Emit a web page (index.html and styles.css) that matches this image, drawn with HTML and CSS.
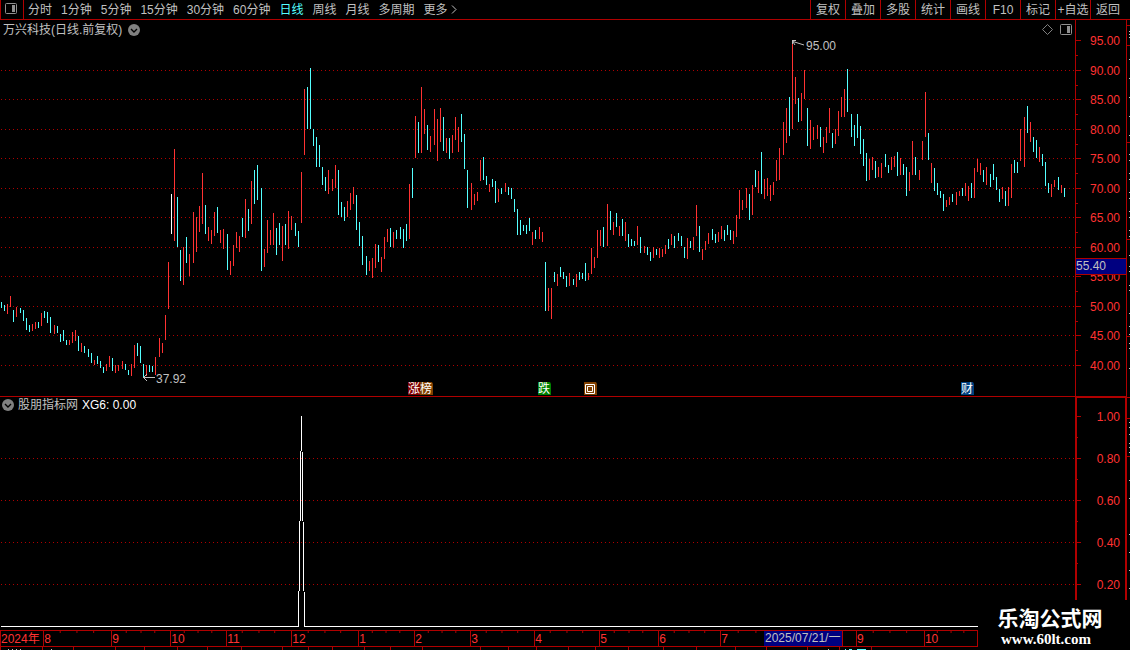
FILE: index.html
```
<!DOCTYPE html>
<html lang="zh-CN">

<head>
    <meta charset="UTF-8">
    <title>万兴科技 日线</title>
    <link rel="stylesheet" href="styles.css">
</head>

<body>
    <header class="toolbar">
        <button class="panel-btn" aria-label="侧栏">
            <svg width="12" height="11"><rect x="0.5" y="0.5" width="11" height="10" rx="1" fill="none" stroke="#909090"/><rect x="7" y="2" width="3" height="7" fill="#909090"/></svg>
        </button>
        <nav class="periods">
            <button>分时</button>
            <button>1分钟</button>
            <button>5分钟</button>
            <button>15分钟</button>
            <button>30分钟</button>
            <button>60分钟</button>
            <button class="active">日线</button>
            <button>周线</button>
            <button>月线</button>
            <button>多周期</button>
            <button class="more">更多<svg width="6" height="9"><path d="M1 0.5L5 4.5L1 8.5" fill="none" stroke="#c0c0c0"/></svg></button>
        </nav>
        <div class="tools">
            <button>复权</button>
            <button>叠加</button>
            <button>多股</button>
            <button>统计</button>
            <button>画线</button>
            <button>F10</button>
            <button>标记</button>
            <button>+自选</button>
            <button>返回</button>
        </div>
    </header>

    <main class="charts">
        <section class="pane pane-price">
            <svg id="price" class="plot"></svg>
            <div class="caption">
                <span>万兴科技(日线.前复权)</span>
                <svg class="drop" width="12" height="12"><circle cx="6" cy="6" r="6" fill="#808080"/><path d="M3 5L6 8L9 5" fill="none" stroke="#000" stroke-width="1.4"/></svg>
            </div>
            <div class="corner">
                <svg width="11" height="11"><path d="M5.5 0.5L10.5 5.5L5.5 10.5L0.5 5.5Z" fill="none" stroke="#808080"/></svg>
                <svg width="12" height="11"><rect x="0.5" y="0.5" width="11" height="10" rx="1" fill="none" stroke="#909090"/><rect x="7" y="2" width="3" height="7" fill="#909090"/></svg>
            </div>
            <svg id="priceAxis" class="axis"></svg>
        </section>
        <section class="pane pane-sub">
            <svg id="sub" class="plot"></svg>
            <div class="caption">
                <svg class="drop" width="12" height="12"><circle cx="6" cy="6" r="6" fill="#808080"/><path d="M3 5L6 8L9 5" fill="none" stroke="#000" stroke-width="1.4"/></svg>
                <span>股朋指标网</span>
                <span class="value">XG6: 0.00</span>
            </div>
            <svg id="subAxis" class="axis"></svg>
        </section>
        <svg id="edge" class="edge"></svg>
    </main>

    <footer class="bottom">
        <div class="months" id="months"></div>
        <svg id="strip" class="strip"></svg>
        <div class="cursor-date">2025/07/21/一</div>
    </footer>

    <div class="mark">
        <strong>乐淘公式网</strong>
        <a href="#">www.60lt.com</a>
    </div>

    <script src="chart.js"></script>
</body>

</html>
```
FILE: styles.css
```
* {
    box-sizing: border-box;
}

body {
    margin: 0;
    min-height: 100vh;
    display: flex;
    flex-direction: column;
    position: relative;
    overflow: hidden;
    background: #000;
    color: #c0c0c0;
    font: 12px/16px "Liberation Sans", "Noto Sans CJK SC", sans-serif;
}

button {
    margin: 0;
    padding: 0;
    border: 0;
    background: none;
    color: inherit;
    font: inherit;
    white-space: nowrap;
    cursor: pointer;
}

svg {
    display: block;
}

svg text {
    font: 12px "Liberation Sans", "Noto Sans CJK SC", sans-serif;
}

/* toolbar */
.toolbar {
    display: flex;
    height: 20px;
    border-bottom: 1px solid #b00000;
}

.panel-btn {
    width: 24px;
    padding: 0 0 2px 4px;
    border: solid #b00000;
    border-width: 0 1px;
}

.periods {
    display: flex;
    gap: 9px;
    padding-left: 4px;
}

.periods .active {
    color: #54ffff;
}

.periods .more {
    display: flex;
    align-items: center;
    gap: 3px;
}

.tools {
    display: flex;
    margin-left: auto;
    padding-right: 5px;
}

.tools button {
    width: 35px;
    border-left: 1px solid #b00000;
}

/* charts */
.charts {
    flex: 1;
    position: relative;
    display: flex;
    flex-direction: column;
    padding-right: 3px;
}

.pane {
    position: relative;
    display: grid;
    grid-template-columns: 1fr 52px;
}

.pane-price {
    height: 377px;
    border-bottom: 1px solid #b00000;
}

.pane-sub {
    flex: 1;
    min-height: 233px;
}

.plot {
    width: 100%;
    height: 100%;
    min-width: 0;
}

.axis {
    width: 52px;
    height: 100%;
    border: solid #b00000;
    border-width: 0 1px;
}

.pane-sub .axis {
    border-width: 1px 2px 0;
}

.axis text {
    fill: #ff3232;
    text-anchor: end;
}

.axis .tag {
    fill: #c0c0c0;
    text-anchor: start;
}

.caption {
    position: absolute;
    top: 2px;
    left: 3px;
    display: flex;
    align-items: center;
    gap: 6px;
}

.pane-sub .caption {
    top: 0;
    left: 2px;
    gap: 4px;
}

.caption .value {
    color: #fff;
}

.corner {
    position: absolute;
    top: 4px;
    right: 55px;
    display: flex;
    gap: 7px;
}

.edge {
    position: absolute;
    top: 0;
    right: 0;
    width: 3px;
    height: 100%;
}

/* time axis */
.bottom {
    position: relative;
    margin-right: 152px;
    height: 20px;
}

.months {
    display: flex;
    height: 17px;
    border: 1px solid #b00000;
    border-left: 0;
    color: #ff3232;
}

.months div {
    position: relative;
    min-width: 0;
    border-left: 1px solid #b00000;
    white-space: nowrap;
}

.months svg {
    position: absolute;
    top: 0;
    left: -1px;
    width: 100%;
    height: 2px;
}

.strip {
    width: 100%;
    height: 3px;
}

.cursor-date {
    position: absolute;
    top: 1px;
    left: 764px;
    width: 79px;
    height: 15px;
    padding-left: 1px;
    border-right: 1px solid #b00000;
    background: #000080;
    color: #c0c0c0;
    line-height: 14px;
    white-space: nowrap;
}

.mark {
    position: absolute;
    right: 0;
    bottom: 0;
    width: 152px;
    height: 50px;
    padding: 6px 8px 0 0;
    background: #000;
    color: #fff;
    text-align: center;
}

.mark strong {
    display: block;
    font-size: 21px;
    line-height: 25px;
}

.mark a {
    display: block;
    padding-right: 8px;
    color: #fff;
    font: bold 15px/16px "Liberation Serif", serif;
    text-decoration: none;
}
```
FILE: chart.js
```
var LINE = '#b00000';
var COLORS = { r: '#ff3232', c: '#54ffff', w: '#ffffff' };
var BASE_WIDTH = 1075;

// colour, x, top, bottom
var bars = (
    'c1,302,308 c4,305,311 r7,304,314 r10,296,307 c13,310,322 r16,307,317 c20,308,313 c23,310,321 c26,318,330 c29,325,332 ' +
    'r32,324,331 r35,322,329 c38,322,328 r41,313,326 c44,311,318 c47,312,323 c50,317,333 r54,325,334 c57,326,333 c60,334,342 ' +
    'c63,330,341 c66,340,345 r69,340,345 r72,332,343 r75,330,341 c78,336,351 r81,343,352 c84,346,353 c88,349,357 c91,353,363 ' +
    'r94,360,365 c97,356,364 c100,361,368 c103,367,373 r106,364,371 r109,356,367 c112,358,371 r115,365,373 r118,365,371 ' +
    'r122,361,369 c125,364,370 c128,370,375 r131,364,376 r134,345,368 c137,343,356 c140,346,363 c143,364,377 r146,365,376 ' +
    'c149,365,372 c152,366,372 r155,357,375 r159,338,357 r162,343,353 r165,315,340 r168,262,309 w171,194,234 r174,149,241 ' +
    'c177,197,247 c180,250,281 r183,247,285 c186,237,263 r189,254,276 r193,212,263 r196,217,252 r199,206,232 r202,173,224 ' +
    'c205,205,234 r208,227,241 r211,230,244 r214,212,236 c217,207,233 r220,230,243 r223,229,249 c227,234,270 r230,261,275 ' +
    'r233,245,266 r236,232,248 r239,236,252 c242,218,237 r245,199,238 c248,209,231 r251,181,224 c254,170,204 c257,165,200 ' +
    'c261,188,271 r264,249,267 r267,220,253 r270,230,245 r273,213,245 c276,228,255 c279,223,245 r282,226,261 c285,224,245 ' +
    'r288,211,249 r291,216,230 c295,223,236 c298,231,247 r301,172,223 r304,89,155 c307,87,129 c310,68,129 c313,129,146 ' +
    'c316,137,167 c319,145,167 c322,167,185 c325,177,191 r328,170,194 r332,179,191 r335,165,188 c338,170,215 c341,202,217 ' +
    'c344,207,221 r347,201,217 r350,193,210 r353,187,204 c356,195,230 c359,222,246 c362,236,265 c366,256,275 r369,261,271 ' +
    'r372,258,278 r375,244,268 c378,245,262 r381,257,272 r384,237,259 r387,229,242 c390,228,247 r393,232,248 c396,230,239 ' +
    'c400,227,239 c403,229,248 c406,224,241 r409,184,239 c412,168,198 r415,116,158 c418,122,153 r421,87,153 r424,109,134 ' +
    'c427,125,150 r430,136,152 r434,109,145 r437,119,161 r440,108,142 c443,117,151 r446,138,153 c449,138,159 r452,135,153 ' +
    'r455,117,140 r458,127,152 c461,114,142 c464,134,169 c467,170,208 r471,183,210 r474,194,205 r477,192,201 r480,160,181 ' +
    'c483,157,180 c486,176,185 r489,184,192 c492,179,187 c495,181,203 r498,189,202 c501,188,194 r505,183,192 c508,187,195 ' +
    'c511,188,199 c514,199,212 c517,209,235 c520,220,235 c523,225,231 c526,225,234 c529,218,231 r532,232,245 c535,230,239 ' +
    'r539,227,239 r542,232,242 c545,262,311 r548,288,311 r551,288,319 c554,272,282 r557,274,286 c560,267,277 c563,272,279 ' +
    'c566,276,287 r569,273,286 c573,279,285 r576,274,287 c579,272,280 c582,273,279 c585,263,281 r588,273,280 r591,248,274 ' +
    'r594,257,268 r597,230,258 r600,230,246 c603,227,247 r607,204,246 c610,211,230 r613,222,235 c616,213,227 r619,226,236 ' +
    'c622,219,236 r625,222,241 c628,234,247 c631,239,246 c634,241,246 r637,226,245 c640,237,253 r644,246,253 c647,247,255 ' +
    'c650,252,261 r653,247,258 c656,249,255 r659,248,258 r662,249,257 r665,245,254 c668,239,249 r671,234,245 c674,236,248 ' +
    'c678,233,241 c681,236,246 c684,247,258 r687,238,259 c690,241,248 r693,237,250 r696,205,236 c699,226,252 r702,249,260 ' +
    'r705,241,250 r708,233,244 c712,229,240 c715,234,243 r718,232,242 r721,226,239 c724,230,241 c727,225,235 c730,230,240 ' +
    'r733,231,244 r736,215,237 r739,190,219 r742,200,210 r746,188,208 c749,194,220 r752,185,215 c755,170,187 r758,171,193 ' +
    'c761,152,194 r764,179,199 r767,178,196 r770,185,201 r773,182,195 r776,160,181 r779,148,180 r783,122,155 r786,108,143 ' +
    'c789,97,136 r792,43,129 r795,77,104 c798,98,122 r801,93,121 r804,70,99 c807,108,146 r810,120,149 r813,127,140 ' +
    'r817,125,139 c820,127,147 r823,137,153 r826,127,143 r829,108,133 c832,133,148 r835,129,144 r838,111,136 r841,97,117 ' +
    'r844,89,117 c847,69,112 c851,114,137 c854,125,146 c857,114,138 c860,126,154 c863,139,166 c866,153,181 r869,159,180 ' +
    'r872,157,170 c875,161,178 r878,167,177 r881,163,178 c885,154,167 c888,165,173 r891,157,170 r894,156,167 c897,152,176 ' +
    'r900,158,175 c903,164,175 c906,167,196 r909,172,191 r912,141,175 c915,157,175 r919,170,180 r922,141,160 r925,92,137 ' +
    'c928,133,160 r931,163,183 c934,168,191 c937,183,195 c940,191,198 c943,194,211 r946,200,207 r949,197,205 c952,194,202 ' +
    'r956,192,205 r959,191,196 c962,188,196 r965,183,196 r968,186,201 c971,183,198 r974,168,198 r977,159,172 r980,163,175 ' +
    'c983,170,182 r986,167,185 c990,174,187 c993,164,180 c996,177,190 c999,189,202 r1002,187,199 c1005,191,206 r1008,187,206 ' +
    'r1011,164,198 c1014,160,173 c1017,162,173 r1020,129,161 r1024,117,167 c1027,106,133 r1030,122,142 c1033,137,152 ' +
    'c1036,140,158 r1039,147,162 c1042,154,166 c1045,162,186 c1048,183,193 r1051,184,197 r1054,180,187 c1058,177,190 ' +
    'r1061,185,193 c1064,188,197'
).split(' ');

var priceLevels = [[95, 40], [90, 70], [85, 99], [80, 129], [75, 158], [70, 188], [65, 217], [60, 247], [55, 276], [50, 306], [45, 335], [40, 365]];
var subLevels = [['1.00', 416], ['0.80', 458], ['0.60', 500], ['0.40', 542], ['0.20', 584]];

var badges = [
    ['涨', 408, '#800000'],
    ['榜', 420, '#804000'],
    ['跌', 538, '#008000'],
    ['回', 584, '#804000'],
    ['财', 961, '#004080']
];

// label, width (the month under the cursor date has no label)
var months = [
    ['2024年', 43], ['8', 68], ['9', 59], ['10', 56], ['11', 65], ['12', 67], ['1', 56], ['2', 56], ['3', 64],
    ['4', 65], ['5', 59], ['6', 62], ['7', 72], ['', 64], ['9', 68], ['10', 53]
];

function rect(x, y, w, h, color) {
    return '<rect x="' + x + '" y="' + y + '" width="' + w + '" height="' + h + '" fill="' + color + '"/>';
}

function text(x, y, s, attrs) {
    return '<text x="' + x + '" y="' + y + '" ' + (attrs || '') + '>' + s + '</text>';
}

function dots(y, width) {
    return '<path d="M1 ' + (y + 0.5) + 'H' + width + '" stroke="' + LINE + '" stroke-dasharray="1 3"/>';
}

function byId(id) {
    return document.getElementById(id);
}

function drawPrice() {
    var el = byId('price');
    var width = el.clientWidth || BASE_WIDTH;
    var top = 20;
    var out = '';
    function sx(x) {
        return Math.round(x * width / BASE_WIDTH);
    }
    priceLevels.slice(1).forEach(function (l) {
        out += dots(l[1] - top, width);
    });
    bars.forEach(function (b) {
        var v = b.slice(1).split(',').map(Number);
        out += rect(sx(v[0]), v[1] - top, 1, v[2] - v[1], COLORS[b[0]]);
    });

    // high and low marks
    var hi = sx(792), lo = sx(143);
    out += '<path d="M' + hi + ' 20.5h4M' + (hi + 0.5) + ' 20v4M' + (hi + 1) + ' 21.5l11 3.5M' + (hi + 1) + ' 22l2 3" fill="none" stroke="#c0c0c0"/>';
    out += text(hi + 14, 30, '95.00', 'fill="#c0c0c0"');
    out += '<path d="M' + lo + ' 357.5h12M' + (lo + 4) + ' 354l-3.5 3.5l3.5 3.5" fill="none" stroke="#c0c0c0"/>';
    out += text(lo + 13, 363, '37.92', 'fill="#c0c0c0"');

    badges.forEach(function (b) {
        var x = sx(b[1]);
        out += '<path d="M' + x + ' 362h12l1 2v11h-13z" fill="' + b[2] + '"/>';
        if (b[0] === '回') {
            out += '<path d="M' + (x + 1.5) + ' 364.5h9v9h-9zM' + (x + 3.5) + ' 366.5h5v5h-5z" fill="none" stroke="#fff"/>';
        } else {
            out += text(x, 373, b[0], 'fill="#fff"');
        }
    });
    el.innerHTML = out;
}

function drawSub() {
    var el = byId('sub');
    var width = el.clientWidth || BASE_WIDTH;
    var x = Math.round(301 * width / BASE_WIDTH);
    var out = '';
    subLevels.slice(1).forEach(function (l) {
        out += dots(l[1] - 397, width);
    });
    out += rect(x, 19, 1, 35, '#fff');
    // the spike widens by one pixel on each side at every step
    [[1, 54, 70], [2, 124, 70], [3, 194, 36]].forEach(function (s) {
        out += rect(x - s[0], s[1], 1, s[2], '#fff') + rect(x + s[0], s[1] + 1, 1, s[2] - 1, '#fff');
    });
    out += rect(1, 229, x - 3, 1, '#fff') + rect(x + 3, 229, width - x - 3, 1, '#fff');
    el.innerHTML = out;
}

function drawAxes() {
    var out = '';
    priceLevels.forEach(function (l, i) {
        var y = l[1] - 20;
        out += rect(0, y, 5, 1, LINE);
        if (i < priceLevels.length - 1) {
            out += rect(0, y + 15, 2, 1, LINE);
        }
        out += text(44, y + 5, l[0].toFixed(2));
    });
    out += rect(0, 238, 50, 17, LINE) + rect(0, 239, 50, 15, '#000080');
    out += text(0, 250, '55.40', 'class="tag"');
    byId('priceAxis').innerHTML = out;

    out = '';
    subLevels.forEach(function (l) {
        var y = l[1] - 398;
        out += rect(0, y, 4, 1, LINE) + rect(0, y + 21, 1, 1, LINE) + text(43, y + 5, l[0]);
    });
    byId('subAxis').innerHTML = out;
}

function drawEdge() {
    var out = '';
    [25, 45, 142, 239, 336, 397, 418, 456].forEach(function (y) {
        out += rect(0, y - 20, 3, 1, LINE);
    });
    [31, 34, 37, 59, 78, 97, 116, 135, 154, 160, 173, 179, 192, 198, 211, 217, 230, 236, 255, 266, 271, 285, 290, 313, 326,
        334, 343, 348, 368, 422, 427, 434, 443, 447, 452, 480, 498, 534, 552, 570, 588].forEach(function (y) {
        out += rect(2, y - 20, 1, 1, '#c0c0c0');
    });
    byId('edge').innerHTML = out;
}

function drawMonths() {
    byId('months').innerHTML = months.map(function (m, i) {
        var ticks = '';
        if (i > 0) {
            [1, 2, 3].forEach(function (n) {
                ticks += rect(Math.round(m[1] * n / 4), 0, 1, 2, LINE);
            });
            ticks = '<svg viewBox="0 0 ' + m[1] + ' 2" preserveAspectRatio="none">' + ticks + '</svg>';
        }
        return '<div style="flex: ' + m[1] + ' 1 0">' + m[0] + ticks + '</div>';
    }).join('');

    var out = '';
    [0, 42, 73, 115, 144, 177, 207, 241, 282, 308, 332, 364, 390, 422, 480, 508, 536, 568, 595, 628, 663, 696, 735, 766, 807, 839, 871].forEach(function (x) {
        out += rect(x, 0, 1, 3, LINE);
    });
    [8, 12, 16, 20, 51, 828].forEach(function (x) {
        out += rect(x, 2, 1, 1, '#c0c0c0');
    });
    out += rect(845, 2, 1, 1, COLORS.c) + rect(849, 2, 3, 1, COLORS.c) + rect(857, 2, 9, 1, COLORS.c);
    byId('strip').innerHTML = out;
}

function draw() {
    drawPrice();
    drawSub();
}

drawAxes();
drawEdge();
drawMonths();
draw();
window.addEventListener('resize', draw);
```
